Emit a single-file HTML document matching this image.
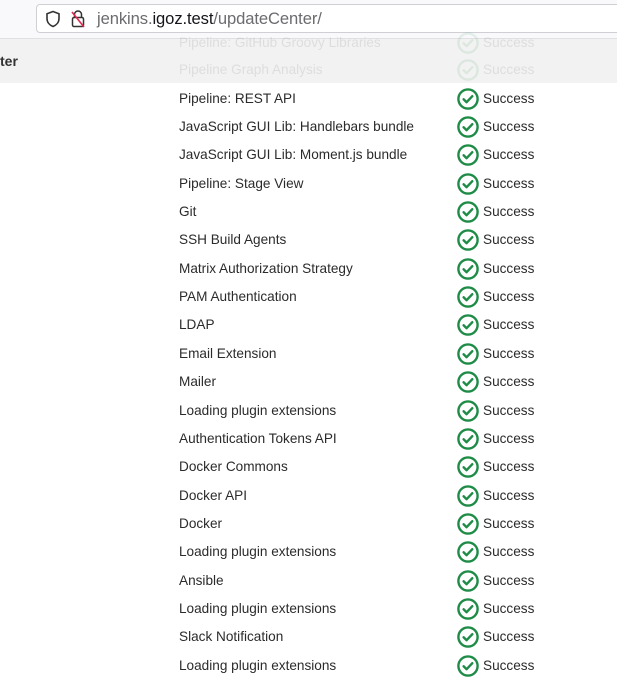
<!DOCTYPE html>
<html><head><style>
html,body{margin:0;padding:0;width:617px;height:696px;overflow:hidden;background:#fff;font-family:"Liberation Sans",sans-serif;color:#333;}
.top{position:absolute;left:0;top:0;width:617px;height:38px;background:#f9f9fb;border-bottom:1px solid #e0e0e2;}
.url{position:absolute;left:36px;top:4px;width:600px;height:29px;background:#fff;border:1px solid #cfcfd4;border-radius:4px;box-sizing:border-box;}
.urltxt{position:absolute;left:97px;top:9px;font-size:16.6px;color:#6b6b70;letter-spacing:-0.1px;}
.urltxt b{color:#15141a;font-weight:normal;}
.band{position:absolute;left:0;top:39px;width:617px;height:44px;background:#f2f2f2;}
.ter{position:absolute;left:0;top:53px;font-size:14px;font-weight:bold;color:#333;}
.row{position:absolute;left:0;width:617px;height:20px;}
.name{position:absolute;left:179px;top:0;font-size:13.6px;line-height:20px;white-space:nowrap;color:#2b2b2b;}
.st{position:absolute;left:483px;top:0;font-size:13.6px;line-height:20px;color:#2b2b2b;}
.ic{position:absolute;left:457px;top:-1px;}
.faded{opacity:.1;}
</style></head><body>
<div class="top">
<div class="url"></div>
<svg style="position:absolute;left:45px;top:10px" width="16" height="18" viewBox="0 0 16 18"><path d="M8 1.5 L14 3.8 V8.5 C14 12.5 11.2 15.3 8 16.5 C4.8 15.3 2 12.5 2 8.5 V3.8 Z" fill="none" stroke="#333" stroke-width="1.6"/></svg>
<svg style="position:absolute;left:70px;top:9px" width="16" height="20" viewBox="0 0 16 20"><path d="M4.5 8 V5.5 A3.5 3.5 0 0 1 11.5 5.5 V8" fill="none" stroke="#333" stroke-width="1.5"/><rect x="2.5" y="8.5" width="11" height="9" rx="1.5" fill="none" stroke="#333" stroke-width="1.5"/><line x1="2" y1="3" x2="14" y2="18" stroke="#e22850" stroke-width="1.6"/></svg>
<div class="urltxt">jenkins.<b>igoz.test</b>/updateCenter/</div>
</div>
<div class="band"></div>
<div class="ter">ter</div>
<svg width="0" height="0" style="position:absolute"><defs><g id="ok"><circle cx="11" cy="11" r="9.6" fill="none" stroke="#1e8c47" stroke-width="2.4"/><path d="M6.6 11.3 L9.6 14.2 L15.3 8.2" fill="none" stroke="#1e8c47" stroke-width="2.4" stroke-linecap="round" stroke-linejoin="round"/></g></defs></svg>

<div class="row faded" style="top:33px"><div class="name">Pipeline: GitHub Groovy Libraries</div><svg class="ic" width="22" height="22"><use href="#ok"/></svg><div class="st">Success</div></div>
<div class="row faded" style="top:60px"><div class="name">Pipeline Graph Analysis</div><svg class="ic" width="22" height="22"><use href="#ok"/></svg><div class="st">Success</div></div>

<div class="row" style="top:89px"><div class="name">Pipeline: REST API</div><svg class="ic" width="22" height="22"><use href="#ok"/></svg><div class="st">Success</div></div>
<div class="row" style="top:117px"><div class="name">JavaScript GUI Lib: Handlebars bundle</div><svg class="ic" width="22" height="22"><use href="#ok"/></svg><div class="st">Success</div></div>
<div class="row" style="top:145px"><div class="name">JavaScript GUI Lib: Moment.js bundle</div><svg class="ic" width="22" height="22"><use href="#ok"/></svg><div class="st">Success</div></div>
<div class="row" style="top:174px"><div class="name">Pipeline: Stage View</div><svg class="ic" width="22" height="22"><use href="#ok"/></svg><div class="st">Success</div></div>
<div class="row" style="top:202px"><div class="name">Git</div><svg class="ic" width="22" height="22"><use href="#ok"/></svg><div class="st">Success</div></div>
<div class="row" style="top:230px"><div class="name">SSH Build Agents</div><svg class="ic" width="22" height="22"><use href="#ok"/></svg><div class="st">Success</div></div>
<div class="row" style="top:259px"><div class="name">Matrix Authorization Strategy</div><svg class="ic" width="22" height="22"><use href="#ok"/></svg><div class="st">Success</div></div>
<div class="row" style="top:287px"><div class="name">PAM Authentication</div><svg class="ic" width="22" height="22"><use href="#ok"/></svg><div class="st">Success</div></div>
<div class="row" style="top:315px"><div class="name">LDAP</div><svg class="ic" width="22" height="22"><use href="#ok"/></svg><div class="st">Success</div></div>
<div class="row" style="top:344px"><div class="name">Email Extension</div><svg class="ic" width="22" height="22"><use href="#ok"/></svg><div class="st">Success</div></div>
<div class="row" style="top:372px"><div class="name">Mailer</div><svg class="ic" width="22" height="22"><use href="#ok"/></svg><div class="st">Success</div></div>
<div class="row" style="top:401px"><div class="name">Loading plugin extensions</div><svg class="ic" width="22" height="22"><use href="#ok"/></svg><div class="st">Success</div></div>
<div class="row" style="top:429px"><div class="name">Authentication Tokens API</div><svg class="ic" width="22" height="22"><use href="#ok"/></svg><div class="st">Success</div></div>
<div class="row" style="top:457px"><div class="name">Docker Commons</div><svg class="ic" width="22" height="22"><use href="#ok"/></svg><div class="st">Success</div></div>
<div class="row" style="top:486px"><div class="name">Docker API</div><svg class="ic" width="22" height="22"><use href="#ok"/></svg><div class="st">Success</div></div>
<div class="row" style="top:514px"><div class="name">Docker</div><svg class="ic" width="22" height="22"><use href="#ok"/></svg><div class="st">Success</div></div>
<div class="row" style="top:542px"><div class="name">Loading plugin extensions</div><svg class="ic" width="22" height="22"><use href="#ok"/></svg><div class="st">Success</div></div>
<div class="row" style="top:571px"><div class="name">Ansible</div><svg class="ic" width="22" height="22"><use href="#ok"/></svg><div class="st">Success</div></div>
<div class="row" style="top:599px"><div class="name">Loading plugin extensions</div><svg class="ic" width="22" height="22"><use href="#ok"/></svg><div class="st">Success</div></div>
<div class="row" style="top:627px"><div class="name">Slack Notification</div><svg class="ic" width="22" height="22"><use href="#ok"/></svg><div class="st">Success</div></div>
<div class="row" style="top:656px"><div class="name">Loading plugin extensions</div><svg class="ic" width="22" height="22"><use href="#ok"/></svg><div class="st">Success</div></div>
</body></html>
